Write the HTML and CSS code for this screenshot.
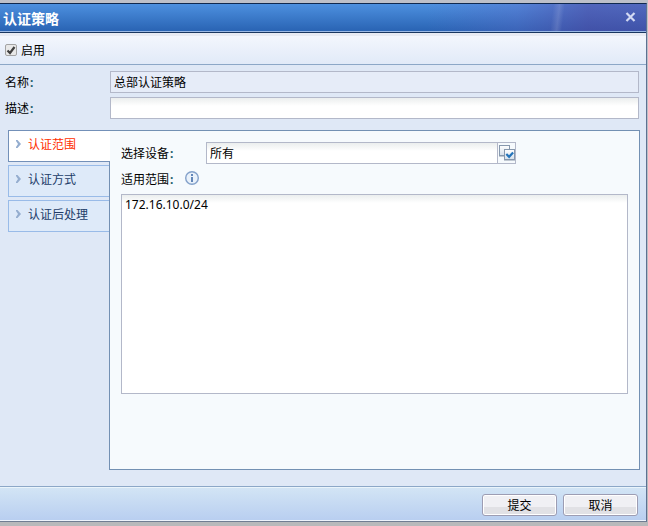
FILE: index.html
```html
<!DOCTYPE html>
<html lang="zh-CN">
<head>
  <meta charset="UTF-8" />
  <meta name="viewport" content="width=device-width, initial-scale=1.0" />
  <title>认证策略</title>
  <link rel="stylesheet" href="styles.css">
</head>
<body>

<form class="dialog">
  <header class="dialog-title">
    <h1>认证策略</h1>
    <button type="button" class="close-btn" aria-label="关闭">
      <svg width="11" height="10" viewBox="0 0 11 10"><path d="M1.5 1L9.5 9M9.5 1L1.5 9" stroke="#d3daf3" stroke-width="2.2" fill="none"/></svg>
    </button>
  </header>

  <div class="toolbar">
    <input type="checkbox" id="enable" class="check" checked>
    <label for="enable">启用</label>
  </div>

  <div class="fields">
    <label for="name">名称<span class="colon">:</span></label>
    <input type="text" id="name" class="text readonly" value="总部认证策略" readonly>
    <label for="desc">描述<span class="colon">:</span></label>
    <input type="text" id="desc" class="text">
  </div>

  <div class="content">
    <nav class="tabs">
      <button type="button" class="tab active"><svg width="5" height="8" viewBox="0 0 5 8"><path d="M0 0h1.5L5 4 1.5 8H0V7l2-3-2-3z" fill="#94adcf"/></svg>认证范围</button>
      <button type="button" class="tab"><svg width="5" height="8" viewBox="0 0 5 8"><path d="M0 0h1.5L5 4 1.5 8H0V7l2-3-2-3z" fill="#94adcf"/></svg>认证方式</button>
      <button type="button" class="tab"><svg width="5" height="8" viewBox="0 0 5 8"><path d="M0 0h1.5L5 4 1.5 8H0V7l2-3-2-3z" fill="#94adcf"/></svg>认证后处理</button>
    </nav>

    <section class="panel">
      <div class="device-row">
        <label for="device">选择设备<span class="colon">:</span></label>
        <div class="picker">
          <input type="text" id="device" class="text" value="所有">
          <button type="button" class="picker-btn" aria-label="选择">
            <svg width="17" height="16" viewBox="0 0 17 16">
              <defs>
                <linearGradient id="box" x1="0" y1="0" x2="0" y2="1">
                  <stop offset="0" stop-color="#fff"/>
                  <stop offset="1" stop-color="#d5dfea"/>
                </linearGradient>
              </defs>
              <rect x="1.5" y="0.5" width="10" height="10" fill="url(#box)" stroke="#8798ad"/>
              <path d="M1 11.5h5" stroke="#c0c8d2"/>
              <rect x="6.5" y="4.5" width="10" height="10" fill="url(#box)" stroke="#8798ad"/>
              <path d="M6 15.5h11" stroke="#c0c8d2"/>
              <path d="M8.3 9l2.8 2.8 4-4.4" fill="none" stroke="#2374bb" stroke-width="2.2"/>
            </svg>
          </button>
        </div>
      </div>

      <div class="range-label">
        <label for="range">适用范围<span class="colon">:</span></label>
        <svg width="14" height="14" viewBox="0 0 14 14">
          <circle cx="7" cy="7" r="6.3" fill="#e9f1fa" stroke="#84a1ca" stroke-width="1.4"/>
          <path d="M6 3h2v2H6zM6 6h2v5H6z" fill="#6286b8"/>
        </svg>
      </div>
      <textarea id="range" class="range" spellcheck="false">172.16.10.0/24</textarea>
    </section>
  </div>

  <footer class="actions">
    <button type="submit" class="btn">提交</button>
    <button type="button" class="btn">取消</button>
  </footer>
</form>

</body>
</html>
```

FILE: styles.css
```css
* {
  box-sizing: border-box;
}

body {
  margin: 0;
  min-height: 100vh;
  display: flex;
  padding: 3px 1px 4px 0;
  background: linear-gradient(#bdc0c9, #b8b9bb);
  font-family: "Noto Sans", "Noto Sans CJK SC", sans-serif;
  font-size: 12px;
  line-height: 18px;
  color: #000;
}

input, button, textarea {
  font: inherit;
  margin: 0;
}

svg {
  display: block;
  flex: none;
}

label {
  padding-top: 2px;
}

.dialog {
  flex: 1;
  display: flex;
  flex-direction: column;
  background: #dfe8f6;
  border: 1px solid #10294f;
  border-color: #10294f #5d7192 #707d92 #5d7192;
  border-left: 0;
}

/* title bar */
.dialog-title {
  display: flex;
  justify-content: space-between;
  align-items: center;
  height: 29px;
  padding: 0 10px 0 3px;
  border-bottom: 1px solid #193660;
  box-shadow: inset 0 -1px #9bb9e5;
  background:
    linear-gradient(97deg, transparent 85.2%, rgba(255,255,255,.13) 86.2%, transparent 87%),
    linear-gradient(90deg, transparent 66%, rgba(98,99,194,.3) 80%, rgba(84,66,158,.55) 91%, rgba(84,66,158,.5)),
    linear-gradient(#4d90df, #2862b2);
}

.dialog-title h1 {
  margin: 0;
  padding-top: 2px;
  font-size: 14px;
  line-height: 20px;
  font-weight: bold;
  color: #fff;
}

.close-btn {
  padding: 0 0 2px;
  border: 0;
  background: none;
  cursor: pointer;
}

.toolbar {
  display: flex;
  align-items: center;
  gap: 4px;
  height: 32px;
  padding: 3px 5px 0;
  border-bottom: 1px solid #8ca7c7;
  background: linear-gradient(#e7eaf3 3px, #f3f6fd 3px, #e1eaf8);
}

.check {
  appearance: none;
  width: 12px;
  height: 12px;
  border: 1px solid #a3a3a3;
  border-radius: 2px;
  background: url("data:image/svg+xml,%3Csvg xmlns='http://www.w3.org/2000/svg' viewBox='0 0 10 10'%3E%3Cpath d='M1.5 5.5l2.5 2.5 4.5-6' fill='none' stroke='%23404040' stroke-width='2.2'/%3E%3C/svg%3E"), #e8e8e8;
}

.check:not(:checked) {
  background: #e8e8e8;
}

.colon {
  margin-left: 1px;
  font-weight: bold;
  color: #23606e;
}

.fields {
  display: grid;
  grid-template-columns: 105px 1fr;
  row-gap: 4px;
  align-items: center;
  padding: 6px 7px 0 5px;
}

.text {
  width: 100%;
  height: 22px;
  padding: 0 3px;
  border: 1px solid #b3b8c9;
  background: linear-gradient(#ebeeee, #fff 8px);
  outline: none;
}

.readonly {
  background: #e6ecf8;
}

/* tabs + panel */
.content {
  flex: 1;
  display: flex;
  padding: 11px 6px 16px 8px;
}

.tabs {
  display: flex;
  flex-direction: column;
  gap: 3px;
  width: 102px;
  margin-right: -1px;
  z-index: 1;
}

.tab {
  display: flex;
  align-items: center;
  gap: 7px;
  height: 32px;
  margin-right: 1px;
  padding: 0 7px 2px;
  border: 1px solid #99bbe8;
  border-right: 0;
  background: #deeaf9;
  color: #213c68;
  cursor: pointer;
}

.tab svg {
  margin-bottom: 2px;
}

.tab.active {
  margin-right: 0;
  border-color: #7390b8;
  background: #fff;
  color: #ff3000;
}

.panel {
  flex: 1;
  padding: 11px;
  border: 1px solid #7390b3;
  background: #f6fafd;
}

.device-row {
  display: flex;
  align-items: center;
}

.device-row label {
  width: 85px;
}

.picker {
  display: flex;
  width: 310px;
}

.picker-btn {
  flex: none;
  width: 18px;
  height: 22px;
  padding: 0;
  border: 1px solid #b3b8c9;
  border-left: 0;
  background: #f6fafd;
  cursor: pointer;
}

.range-label {
  display: flex;
  align-items: center;
  gap: 12px;
  margin: 5px 0;
}

.range-label svg {
  margin-bottom: 2px;
}

.range {
  display: block;
  width: 100%;
  height: 200px;
  padding: 1px 3px;
  border: 1px solid #b3b8c9;
  background: linear-gradient(#ebeeee, #fff 8px);
  resize: none;
  outline: none;
}

/* footer */
.actions {
  display: flex;
  justify-content: flex-end;
  gap: 6px;
  height: 35px;
  padding: 7px 8px 0;
  border-top: 1px solid #8ca7c7;
  box-shadow: inset 0 1px #eaf4fb, inset 0 -1px #eef4fc;
  background: linear-gradient(#d3e5f5, #b8cef0);
}

.btn {
  width: 75px;
  height: 22px;
  padding: 1px 0 0;
  border: 1px solid #9d9db3;
  border-radius: 3px;
  box-shadow: inset 0 0 0 1px #fff;
  background: linear-gradient(#f0f0f4 60%, #e1e1e5 60%);
  line-height: 20px;
  cursor: pointer;
}
```
